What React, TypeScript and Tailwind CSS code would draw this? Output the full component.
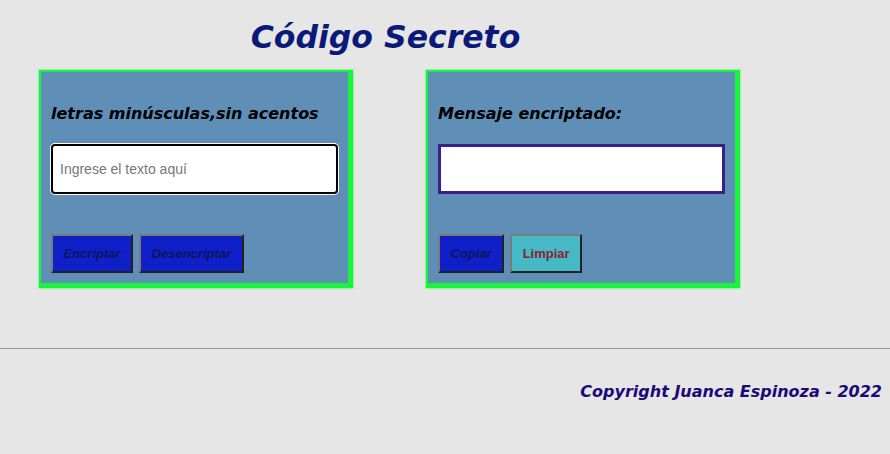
export default function App() {
  const btn =
    "h-[39px] px-[10.5px] border-2 border-t-[#7a7a7a] border-l-[#7a7a7a] border-r-[#222] border-b-[#222] text-[13px] font-bold font-['Liberation_Sans',Arial,sans-serif]";
  const card =
    "w-[314px] border-t-[2px] border-l-[2px] border-r-[5px] border-b-[5px] border-[#16f53c] bg-[#5f8eb6] px-[10px] pt-[31px] pb-[10px] shadow-[0_0_2px_#16f53c]";
  const heading =
    "text-[16px] leading-[22px] font-bold italic text-black font-['DejaVu_Sans',Verdana,sans-serif]";

  return (
    <div className="min-h-[454px] bg-[#e6e6e6] pt-[17px]">
      <div className="ml-[38px] w-[703px]">
        <h1 className="pr-[8px] text-center text-[31.5px] leading-[40px] font-bold italic text-[#0b1a78] font-['DejaVu_Sans',Verdana,sans-serif]">
          Código Secreto
        </h1>

        <div className="mt-[13px] ml-px flex gap-[73px]">
          {/* entrada */}
          <section className={card}>
            <h3 className={heading}>letras minúsculas,sin acentos</h3>
            <input
              type="text"
              placeholder="Ingrese el texto aquí"
              className="mt-[19px] block h-[50px] w-full rounded-[4px] border-2 border-black bg-white px-[7px] text-[14px] ring-1 ring-white outline-none placeholder:text-[#777] font-['Liberation_Sans',Arial,sans-serif]"
            />
            <div className="mt-[40px] flex gap-[6px]">
              <button className={`${btn} bg-[#1020c8] italic text-[#0c1560]`}>Encriptar</button>
              <button className={`${btn} bg-[#1020c8] italic text-[#0c1560]`}>Desencriptar</button>
            </div>
          </section>

          {/* salida */}
          <section className={card}>
            <h3 className={heading}>Mensaje encriptado:</h3>
            <textarea
              readOnly
              className="mt-[19px] block h-[50px] w-full resize-none border-[3px] border-[#3b1f8a] bg-white outline-none"
            />
            <div className="mt-[40px] flex gap-[6px]">
              <button className={`${btn} bg-[#1020c8] italic text-[#0c1560]`}>Copiar</button>
              <button className={`${btn} bg-[#45b9c5] text-[#8a2232]`}>Limpiar</button>
            </div>
          </section>
        </div>
      </div>

      <hr className="mt-[60px] border-0 border-t border-[#9a9a9a]" />

      <footer className="pt-[33px] pr-[8px] text-right">
        <p className="text-[16px] leading-[20px] font-bold italic text-[#1a0a78] font-['DejaVu_Sans',Verdana,sans-serif]">
          Copyright Juanca Espinoza - 2022
        </p>
      </footer>
    </div>
  );
}
